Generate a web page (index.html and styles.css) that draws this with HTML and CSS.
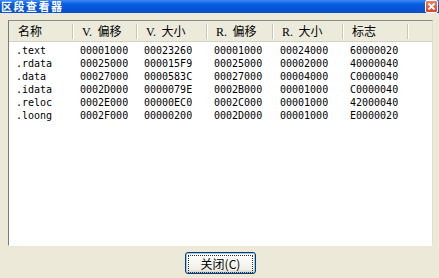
FILE: index.html
```html
<!DOCTYPE html>
<html lang="zh-CN">
<head>
    <meta charset="UTF-8">
    <title>区段查看器</title>
    <link rel="stylesheet" href="styles.css">
</head>
<body>
    <div class="window">
        <!-- Title bar -->
        <div class="titlebar">
            <span class="title">区段查看器</span>
            <span class="close-btn">
                <svg width="9" height="9" viewBox="0 0 9 9"><path d="M1.5 1.5 L7.5 7.5 M7.5 1.5 L1.5 7.5" stroke="#fff" stroke-width="1.8"/></svg>
            </span>
        </div>

        <div class="content">
            <!-- Section list -->
            <div class="list">
                <div class="list-header">
                    <div class="col">名称</div>
                    <div class="col"><span class="latin">V.</span>&nbsp; 偏移</div>
                    <div class="col"><span class="latin">V.</span>&nbsp; 大小</div>
                    <div class="col"><span class="latin">R.</span>&nbsp; 偏移</div>
                    <div class="col"><span class="latin">R.</span>&nbsp; 大小</div>
                    <div class="col">标志</div>
                    <div class="col last"></div>
                </div>
                <div class="row"><span>.text</span><span>00001000</span><span>00023260</span><span>00001000</span><span>00024000</span><span>60000020</span></div>
                <div class="row"><span>.rdata</span><span>00025000</span><span>000015F9</span><span>00025000</span><span>00002000</span><span>40000040</span></div>
                <div class="row"><span>.data</span><span>00027000</span><span>0000583C</span><span>00027000</span><span>00004000</span><span>C0000040</span></div>
                <div class="row"><span>.idata</span><span>0002D000</span><span>0000079E</span><span>0002B000</span><span>00001000</span><span>C0000040</span></div>
                <div class="row"><span>.reloc</span><span>0002E000</span><span>00000EC0</span><span>0002C000</span><span>00001000</span><span>42000040</span></div>
                <div class="row"><span>.loong</span><span>0002F000</span><span>00000200</span><span>0002D000</span><span>00001000</span><span>E0000020</span></div>
            </div>

            <!-- Buttons -->
            <div class="button-bar">
                <button class="btn"><span class="focus">关闭(C)</span></button>
            </div>
        </div>
    </div>
</body>
</html>
```

FILE: styles.css
```css
body {
    margin: 0;
    background-color: #ece9d8;
    font-family: "DejaVu Sans Mono", "Noto Sans CJK SC", monospace;
    font-size: 10px;
    color: #000;
}

.window {
    width: 439px;
    height: 278px;
    overflow: hidden;
}

/* XP style title bar */
.titlebar {
    height: 13px;
    display: flex;
    align-items: center;
    justify-content: space-between;
    background: linear-gradient(to bottom, #3d8af7 0%, #0a5fe0 30%, #0654d8 70%, #0b4fc8 100%);
}

.title {
    color: #fff;
    font-family: "Noto Sans CJK SC", sans-serif;
    font-weight: bold;
    font-size: 11px;
    line-height: 13px;
    padding-left: 1px;
    letter-spacing: 1.5px;
}

.close-btn {
    width: 11px;
    height: 11px;
    margin-right: 1px;
    border: 1px solid #fff;
    border-radius: 2px;
    background: linear-gradient(to bottom, #e8806a, #d9441f);
    display: flex;
    align-items: center;
    justify-content: center;
}

.content {
    padding: 7px 6px 0 8px;
}

.list {
    height: 224px;
    background: #fff;
    border-top: 1px solid #8a8a8a;
    border-left: 1px solid #7a7a7a;
    border-right: 1px solid #e2dfd0;
    border-bottom: 1px solid #fdfdf9;
}

.list-header,
.row {
    display: grid;
    grid-template-columns: 64px 64px 70px 66px 70px 65px 1fr;
}

.list-header {
    height: 20px;
    background: #ebeadb;
    border-bottom: 1px solid #d6d2c2;
    font-family: "Noto Sans CJK SC", sans-serif;
    font-size: 12px;
}

.col {
    padding-left: 9px;
    border-right: 1px solid #cbc7b8;
    box-shadow: 1px 0 0 #fff;
    margin: 3px 0;
    line-height: 14px;
    white-space: nowrap;
}

.col.last {
    border-right: none;
    box-shadow: none;
}

.latin {
    font-family: "Liberation Serif", serif;
    font-size: 12px;
}

.row {
    height: 13px;
    line-height: 13px;
}

.list-header + .row {
    margin-top: 2px;
}

.row span {
    padding-left: 7px;
}

.button-bar {
    display: flex;
    justify-content: center;
    padding-top: 6px;
}

.btn {
    width: 71px;
    height: 22px;
    padding: 2px;
    border: 1px solid #003c74;
    border-radius: 3px;
    background: linear-gradient(to bottom, #ffffff, #f0f0ea 80%, #d6d0c5);
    box-shadow: inset 0 0 0 1px #a9c6f0;
    font-family: "Noto Sans CJK SC", sans-serif;
    font-size: 12px;
    color: #000;
}

.focus {
    display: block;
    height: 16px;
    line-height: 16px;
    border: 1px dotted #333;
}
```
